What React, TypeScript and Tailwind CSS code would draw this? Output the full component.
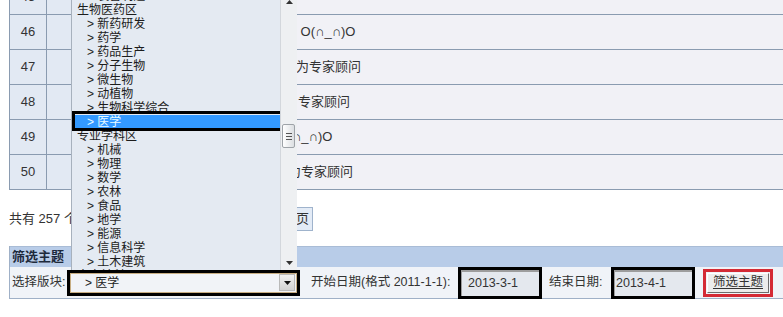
import React from 'react';

const rows = [
  { n: '45', hide: '', tail: '', w: 'w-[203px]' },
  { n: '46', hide: '感谢各位老师的耐心解答', tail: ' O(∩_∩)O', w: 'w-[203px]' },
  { n: '47', hide: '诚邀各领域资深学者加入成', tail: '为专家顾问', w: 'w-[202px]' },
  { n: '48', hide: '欢迎各位老师申请成为本版', tail: '专家顾问', w: 'w-[204px]' },
  { n: '49', hide: '新版块上线啦大家多多支持O(', tail: '∩_∩)O', w: 'w-[198px]' },
  { n: '50', hide: '招募生物医药方向的老师成', tail: '为专家顾问', w: 'w-[194px]' },
];

const items = [
  { t: '装备制造', sub: true },
  { t: '生物医药区', sub: false },
  { t: '新药研发', sub: true },
  { t: '药学', sub: true },
  { t: '药品生产', sub: true },
  { t: '分子生物', sub: true },
  { t: '微生物', sub: true },
  { t: '动植物', sub: true },
  { t: '生物科学综合', sub: true },
  { t: '医学', sub: true, active: true },
  { t: '专业学科区', sub: false },
  { t: '机械', sub: true },
  { t: '物理', sub: true },
  { t: '数学', sub: true },
  { t: '农林', sub: true },
  { t: '食品', sub: true },
  { t: '地学', sub: true },
  { t: '能源', sub: true },
  { t: '信息科学', sub: true },
  { t: '土木建筑', sub: true },
  { t: '人文社科区', sub: false },
  { t: '经济', sub: true },
];

function DropList() {
  return (
    <div className="absolute left-[71px] top-[-11px] z-10 h-[283px] w-[226px] overflow-hidden border-l border-[#a7b1bd] bg-[#e4eaf2] text-[12px] leading-[14px] text-[#1c1c1c]">
      <div className="w-[209px]">
        {items.map((it, i) => (
          <div
            key={i}
            className={`h-[14px] whitespace-nowrap ${it.sub ? 'pl-[15px]' : 'pl-[5px]'} ${
              it.active ? 'bg-[#3399ff] text-[#e8fbff]' : ''
            }`}
          >
            {it.sub ? '> ' : ''}
            {it.t}
          </div>
        ))}
      </div>

      {/* annotation round the chosen item */}
      <div className="absolute left-0 top-[122px] h-[20px] w-[211px] border-[3px] border-black" />

      {/* scrollbar */}
      <div className="absolute right-0 top-0 h-full w-[17px] border-l border-[#d3d7dc] bg-[#eef0f2]">
        <svg className="absolute left-[5px] top-[11px]" width="7" height="4" viewBox="0 0 7 4">
          <path d="M0 4 L3.5 0 L7 4 Z" fill="#333" />
        </svg>
        <div className="absolute left-[1px] top-[135px] flex h-[24px] w-[13px] flex-col items-center justify-center gap-[2px] rounded-[2px] border border-[#9ea3a8] bg-gradient-to-r from-white to-[#dcdfe2]">
          <div className="h-px w-[6px] bg-[#555]" />
          <div className="h-px w-[6px] bg-[#555]" />
          <div className="h-px w-[6px] bg-[#555]" />
        </div>
        <svg className="absolute left-[5px] top-[272px]" width="7" height="4" viewBox="0 0 7 4">
          <path d="M0 0 L3.5 4 L7 0 Z" fill="#333" />
        </svg>
      </div>
    </div>
  );
}

export default function App() {
  return (
    <div className="relative h-[317px] w-[783px] overflow-hidden bg-white font-['Liberation_Sans','Noto_Sans_CJK_SC',sans-serif] text-[13px] text-[#333]">
      {/* topic table */}
      <div className="ml-[9px] mt-[-20px] w-[800px] border-l border-[#8a9bb0]">
        {rows.map((r) => (
          <div key={r.n} className="flex h-[35px] border-b border-[#8a9bb0]">
            <div className="flex w-[37px] items-center justify-center border-r border-[#8a9bb0] bg-[#e2e9f3]">
              {r.n}
            </div>
            <div className="w-[40px] border-r border-[#8a9bb0] bg-[#e2e9f3]" />
            <div className="flex flex-1 items-center whitespace-nowrap bg-[#f1f1f6] pl-[7px]">
              <span className={`inline-block overflow-hidden ${r.w}`}>{r.hide}</span>
              <span className="whitespace-pre">{r.tail}</span>
            </div>
          </div>
        ))}
      </div>

      {/* pager */}
      <div className="ml-[9px] mt-[17px] flex h-[24px] items-center">
        <span className="w-[270px] overflow-hidden whitespace-nowrap">共有 257 个主题，共 26 页</span>
        <span className="flex h-[24px] w-[34px] items-center justify-end whitespace-nowrap border border-[#9fb3cc] bg-[#e3ebf6] pr-[3px]">
          末页
        </span>
      </div>

      {/* filter panel */}
      <div className="ml-[9px] mt-[15px] w-[790px] border-b border-l border-[#9fb0c7]">
        <div className="flex h-[21px] items-center border-t border-[#a9bcd6] bg-[#b8cce8] pl-[2px] font-bold text-[#1e2a3c]">
          筛选主题
        </div>
        <div className="flex h-[31px] items-center bg-[#f0f3f8] pl-[2px] text-[12.5px]">
          <span className="w-[55px] whitespace-nowrap">选择版块:</span>
          <div className="relative z-20 h-[26px] w-[233px] border-[3px] border-black">
            <div className="flex h-full items-center border border-[#c7ad82] bg-[#f1f3f7]">
              <span className="flex-1 pl-[14px] text-[12px] text-[#222]">&gt; 医学</span>
              <div className="mr-px flex h-[17px] w-[16px] items-center justify-center border border-[#b9b9b9] bg-gradient-to-b from-[#f2f2f2] to-[#d2d2d2]">
                <svg width="7" height="4" viewBox="0 0 7 4">
                  <path d="M0 0 L3.5 4 L7 0 Z" fill="#111" />
                </svg>
              </div>
            </div>
          </div>
          <span className="ml-[11px] w-[147px] whitespace-nowrap">开始日期(格式 2011-1-1):</span>
          <div className="h-[32px] w-[84px] border-[3px] border-black">
            <div className="flex h-full items-center border-l border-t-2 border-[#9d9d9d] bg-[#e4e8ee] pl-[6px]">
              2013-3-1
            </div>
          </div>
          <span className="ml-[7px] w-[62px] whitespace-nowrap">结束日期:</span>
          <div className="h-[32px] w-[84px] border-[3px] border-black">
            <div className="flex h-full items-center border-l border-t-2 border-[#9d9d9d] bg-[#e4e8ee] pl-px">
              2013-4-1
            </div>
          </div>
          <div className="ml-[8px] flex h-[28px] w-[70px] items-center justify-center border-[3px] border-[#d42a35]">
            <div className="flex h-[20px] w-[62px] items-center justify-center border border-b-[#6d6d6d] border-l-white border-r-[#6d6d6d] border-t-white bg-[#ececec] underline underline-offset-2">
              筛选主题
            </div>
          </div>
        </div>
      </div>

      <DropList />
    </div>
  );
}
